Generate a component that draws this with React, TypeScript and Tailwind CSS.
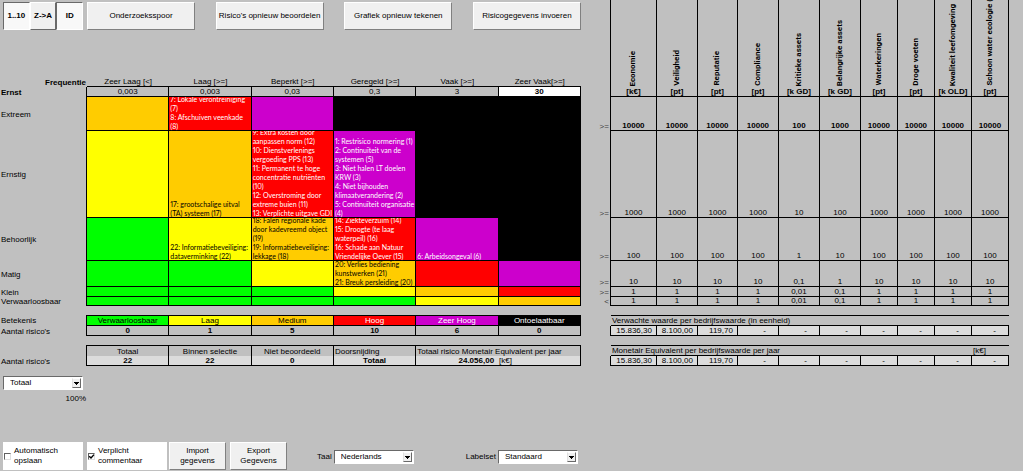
import { useState } from "react";
import type { ReactNode } from "react";

type Level = "none" | "low" | "medium" | "high" | "veryHigh" | "unacceptable";

interface MatrixCell {
  level: Level;
  lines?: string[];
}

interface MatrixRow {
  label: string;
  height: string;
  cells: MatrixCell[];
}

const LEVEL_CLASS: Record<Level, string> = {
  none: "bg-[#00ff00] text-black",
  low: "bg-[#ffff00] text-black",
  medium: "bg-[#ffcc00] text-black",
  high: "bg-[#ff0000] text-white",
  veryHigh: "bg-[#cc00cc] text-white",
  unacceptable: "bg-black text-white",
};

const FREQUENCIES = [
  { label: "Zeer Laag [<]", value: "0,003" },
  { label: "Laag [>=]", value: "0,003" },
  { label: "Beperkt [>=]", value: "0,03" },
  { label: "Geregeld [>=]", value: "0,3" },
  { label: "Vaak [>=]", value: "3" },
  { label: "Zeer Vaak[>=]", value: "30" },
];

const MATRIX: MatrixRow[] = [
  {
    label: "Extreem",
    height: "h-[34px]",
    cells: [
      { level: "medium" },
      { level: "high", lines: ["7: Lokale verontreiniging", "(7)", "8: Afschuiven veenkade", "(8)"] },
      { level: "veryHigh" },
      { level: "unacceptable" },
      { level: "unacceptable" },
      { level: "unacceptable" },
    ],
  },
  {
    label: "Ernstig",
    height: "h-[87px]",
    cells: [
      { level: "low" },
      { level: "medium", lines: ["17: grootschalige uitval", "(TA) systeem (17)"] },
      {
        level: "high",
        lines: [
          "9: Extra kosten door",
          "aanpassen norm (12)",
          "10: Dienstverlenings",
          "vergoeding PPS (13)",
          "11: Permanent te hoge",
          "concentratie nutriënten",
          "(10)",
          "12: Overstroming door",
          "extreme buien (11)",
          "13: Verplichte uitgave GDI",
        ],
      },
      {
        level: "veryHigh",
        lines: [
          "1: Restrisico normering (1)",
          "2: Continuïteit van de",
          "systemen (5)",
          "3: Niet halen LT doelen",
          "KRW (3)",
          "4: Niet bijhouden",
          "klimaatverandering (2)",
          "5: Continuïteit organisatie",
          "(4)",
        ],
      },
      { level: "unacceptable" },
      { level: "unacceptable" },
    ],
  },
  {
    label: "Behoorlijk",
    height: "h-[43px]",
    cells: [
      { level: "none" },
      { level: "low", lines: ["22: Informatiebeveiliging:", "dataverminking (22)"] },
      {
        level: "medium",
        lines: ["18: Falen regionale kade", "door kadevreemd object", "(19)", "19: Informatiebeveiliging:", "lekkage (18)"],
      },
      {
        level: "high",
        lines: ["14: Ziekteverzuim (14)", "15: Droogte (te laag", "waterpeil) (16)", "16: Schade aan Natuur", "Vriendelijke Oever (15)"],
      },
      { level: "veryHigh", lines: ["6: Arbeidsongeval (6)"] },
      { level: "unacceptable" },
    ],
  },
  {
    label: "Matig",
    height: "h-[26px]",
    cells: [
      { level: "none" },
      { level: "none" },
      { level: "low" },
      { level: "medium", lines: ["20: Verlies bediening", "kunstwerken (21)", "21: Breuk persleiding (20)"] },
      { level: "high" },
      { level: "veryHigh" },
    ],
  },
  {
    label: "Klein",
    height: "h-[10px]",
    cells: [
      { level: "none" },
      { level: "none" },
      { level: "none" },
      { level: "low" },
      { level: "medium" },
      { level: "high" },
    ],
  },
  {
    label: "Verwaarloosbaar",
    height: "h-[9px]",
    cells: [
      { level: "none" },
      { level: "none" },
      { level: "none" },
      { level: "none" },
      { level: "low" },
      { level: "medium" },
    ],
  },
];

const LEGEND: { level: Level; label: string; count: number }[] = [
  { level: "none", label: "Verwaarloosbaar", count: 0 },
  { level: "low", label: "Laag", count: 1 },
  { level: "medium", label: "Medium", count: 5 },
  { level: "high", label: "Hoog", count: 10 },
  { level: "veryHigh", label: "Zeer Hoog", count: 6 },
  { level: "unacceptable", label: "Ontoelaatbaar", count: 0 },
];

const VALUES = [
  { name: "Economie", unit: "[k€]" },
  { name: "Veiligheid", unit: "[pt]" },
  { name: "Reputatie", unit: "[pt]" },
  { name: "Compliance", unit: "[pt]" },
  { name: "Kritieke assets", unit: "[k GD]" },
  { name: "Belangrijke assets", unit: "[k GD]" },
  { name: "Waterkeringen", unit: "[pt]" },
  { name: "Droge voeten", unit: "[pt]" },
  { name: "Kwaliteit leefomgeving", unit: "[k OLD]" },
  { name: "Schoon water ecologie (", unit: "[pt]" },
];

const THRESHOLDS = [
  { sign: ">=", height: "h-[34px]", values: ["10000", "10000", "10000", "10000", "100", "1000", "10000", "10000", "10000", "10000"] },
  { sign: ">=", height: "h-[87px]", values: ["1000", "1000", "1000", "1000", "10", "100", "1000", "1000", "1000", "1000"] },
  { sign: ">=", height: "h-[43px]", values: ["100", "100", "100", "100", "1", "10", "100", "100", "100", "100"] },
  { sign: ">=", height: "h-[26px]", values: ["10", "10", "10", "10", "0,1", "1", "10", "10", "10", "10"] },
  { sign: ">=", height: "h-[10px]", values: ["1", "1", "1", "1", "0,01", "0,1", "1", "1", "1", "1"] },
  { sign: "<", height: "h-[9px]", values: ["1", "1", "1", "1", "0,01", "0,1", "1", "1", "1", "1"] },
];

const AMOUNTS = ["15.836,30", "8.100,00", "119,70", "-", "-", "-", "-", "-", "-", "-"];

const TABLE = "w-full table-fixed border-separate border-spacing-0";

function RaisedButton({ children, className = "" }: { children: ReactNode; className?: string }) {
  return (
    <button
      type="button"
      className={`h-7 border border-t-white border-l-white border-r-[#808080] border-b-[#808080] bg-[#f0f0f0] text-center ${className}`}
    >
      {children}
    </button>
  );
}

function ToggleButton({ label, pressed, onClick }: { label: string; pressed: boolean; onClick: () => void }) {
  return (
    <button
      type="button"
      aria-pressed={pressed}
      onClick={onClick}
      className={`h-7 flex-1 border text-center font-bold ${
        pressed
          ? "border-t-[#696969] border-l-[#696969] border-r-white border-b-white bg-[#f8f8f8]"
          : "border-t-white border-l-white border-r-[#696969] border-b-[#696969] bg-[#f0f0f0]"
      }`}
    >
      {label}
    </button>
  );
}

function Dropdown({ id, options, label }: { id: string; options: string[]; label?: string }) {
  return (
    <div className="relative w-20">
      <select
        id={id}
        aria-label={label}
        className="block h-[14px] w-full appearance-none border border-t-[#696969] border-l-[#696969] border-r-white border-b-white bg-white pl-[6px] text-black"
      >
        {options.map((option) => (
          <option key={option}>{option}</option>
        ))}
      </select>
      <span className="pointer-events-none absolute top-[2px] right-[2px] flex h-[10px] w-[9px] items-center justify-center border border-t-white border-l-[#e0e0e0] border-r-[#696969] border-b-[#696969] bg-[#f0f0f0]">
        <svg viewBox="0 0 5 3" className="h-[3px] w-[5px]" shapeRendering="crispEdges">
          <path d="M0 0h5L2.5 3z" fill="#000" />
        </svg>
      </span>
    </div>
  );
}

function CheckPanel({ id, lines, defaultChecked }: { id: string; lines: string[]; defaultChecked: boolean }) {
  const [checked, setChecked] = useState(defaultChecked);

  return (
    <label htmlFor={id} className="flex h-7 w-20 items-center gap-[3px] bg-white pl-px">
      <span className="relative h-[7px] w-[7px]">
        <input
          id={id}
          type="checkbox"
          checked={checked}
          onChange={(e) => setChecked(e.target.checked)}
          className="block h-[7px] w-[7px] appearance-none border border-t-[#606060] border-l-[#606060] border-r-[#e0e0e0] border-b-[#e0e0e0] bg-white"
        />
        {checked && (
          <svg viewBox="0 0 7 7" className="pointer-events-none absolute inset-0 h-[7px] w-[7px]">
            <path d="M1.2 3.2 3 5 6 1.6" fill="none" stroke="#000" strokeWidth="1.4" />
          </svg>
        )}
      </span>
      <span>
        {lines[0]}
        <br />
        {lines[1]}
      </span>
    </label>
  );
}

// keeps the text of a one-line cell inside its border
function Line({ children }: { children?: ReactNode }) {
  return <div className="h-[9px] leading-[9px] whitespace-nowrap">{children}</div>;
}

function RiskColumns() {
  return (
    <colgroup>
      <col className="w-[87px]" />
      {FREQUENCIES.map((f) => (
        <col key={f.label} />
      ))}
    </colgroup>
  );
}

function RiskMatrix() {
  return (
    <table className={TABLE}>
      <RiskColumns />
      <thead>
        <tr className="h-[10px]">
          <th className="p-0 pr-px text-right">
            <Line>Frequentie</Line>
          </th>
          {FREQUENCIES.map((f) => (
            <th key={f.label} className="border-b border-black p-0 font-normal">
              <Line>{f.label}</Line>
            </th>
          ))}
        </tr>
        <tr className="h-[10px]">
          <th className="border-r border-black p-0 pl-px text-left">
            <Line>Ernst</Line>
          </th>
          {FREQUENCIES.map((f, i) => (
            <td
              key={f.label}
              className={`border-r border-b border-black p-0 text-center ${i === 5 ? "bg-white font-bold" : ""}`}
            >
              <Line>{f.value}</Line>
            </td>
          ))}
        </tr>
      </thead>
      <tbody>
        {MATRIX.map((row) => (
          <tr key={row.label} className={row.height}>
            <th className="border-r border-black p-0 pl-px text-left align-middle font-normal">
              <Line>{row.label}</Line>
            </th>
            {row.cells.map((cell, i) => (
              <td key={i} className={`relative border-r border-b border-black p-0 ${LEVEL_CLASS[cell.level]}`}>
                {cell.lines && (
                  <div className="absolute inset-x-0 top-0 -bottom-px flex flex-col justify-end overflow-hidden pl-px font-[Lato,sans-serif] text-[7px] leading-[9px] whitespace-nowrap proportional-nums">
                    {cell.lines.map((line) => (
                      <div key={line} className="shrink-0">
                        {line}
                      </div>
                    ))}
                  </div>
                )}
              </td>
            ))}
          </tr>
        ))}
      </tbody>
    </table>
  );
}

function LegendTable() {
  return (
    <table className={TABLE}>
      <RiskColumns />
      <tbody>
        <tr className="h-[11px]">
          <th className="border-r border-black p-0 pl-px text-left font-normal">
            <Line>Betekenis</Line>
          </th>
          {LEGEND.map((item) => (
            <th key={item.label} className={`border-y border-r border-black p-0 font-normal ${LEVEL_CLASS[item.level]}`}>
              <Line>{item.label}</Line>
            </th>
          ))}
        </tr>
        <tr className="h-[10px]">
          <th className="border-r border-black p-0 pl-px text-left font-normal">
            <Line>Aantal risico's</Line>
          </th>
          {LEGEND.map((item) => (
            <td key={item.label} className="border-r border-b border-black p-0 text-center font-bold">
              <Line>{item.count}</Line>
            </td>
          ))}
        </tr>
      </tbody>
    </table>
  );
}

function TotalsTable() {
  const head = "border-t border-r border-black p-0 font-normal";
  const value = "border-r border-b border-black bg-[#dcdcdc] p-0 text-center font-bold";

  return (
    <table className={TABLE}>
      <RiskColumns />
      <tbody>
        <tr className="h-[11px]">
          <td className="border-r border-black p-0" />
          <th className={head}>
            <Line>Totaal</Line>
          </th>
          <th className={head}>
            <Line>Binnen selectie</Line>
          </th>
          <th className={head}>
            <Line>Niet beoordeeld</Line>
          </th>
          <th className={`${head} pl-px text-left`}>
            <Line>Doorsnijding</Line>
          </th>
          <th colSpan={2} className={`${head} pl-px text-left`}>
            <Line>Totaal risico Monetair Equivalent per jaar</Line>
          </th>
        </tr>
        <tr className="h-[10px]">
          <th className="border-r border-black p-0 pl-px text-left font-normal">
            <Line>Aantal risico's</Line>
          </th>
          {["22", "22", "0", "Totaal"].map((text, i) => (
            <td key={i} className={value}>
              <Line>{text}</Line>
            </td>
          ))}
          <td colSpan={2} className={value}>
            <div className="grid grid-cols-2">
              <div className="pr-1 text-right">
                <Line>24.056,00</Line>
              </div>
              <div className="pl-px text-left font-normal">
                <Line>[k€]</Line>
              </div>
            </div>
          </td>
        </tr>
      </tbody>
    </table>
  );
}

function ValueColumns() {
  return (
    <colgroup>
      <col className="w-[14px]" />
      <col className="w-[46px]" />
      <col className="w-[41px]" />
      <col className="w-[40px]" />
      <col className="w-[41px]" />
      <col className="w-[41px]" />
      <col className="w-[41px]" />
      <col className="w-[37px]" />
      <col className="w-[37px]" />
      <col className="w-[37px]" />
      <col className="w-[37px]" />
    </colgroup>
  );
}

function ThresholdTable() {
  return (
    <table className={TABLE}>
      <ValueColumns />
      <thead>
        <tr className="h-[97px]">
          <td className="border-r border-black p-0" />
          {VALUES.map((v) => (
            <th key={v.name} className="border-r border-b border-black p-0">
              <div className="flex h-24 flex-col items-center justify-end overflow-hidden">
                <span className="mb-px shrink-0 rotate-180 font-[Roboto,sans-serif] whitespace-nowrap [writing-mode:vertical-rl]">
                  {v.name}
                </span>
                <Line>{v.unit}</Line>
              </div>
            </th>
          ))}
        </tr>
      </thead>
      <tbody>
        {THRESHOLDS.map((row, r) => (
          <tr key={r} className={row.height}>
            <th className="border-r border-black p-0 pr-px text-right align-bottom font-normal text-[#404040]">
              <Line>{row.sign}</Line>
            </th>
            {row.values.map((value, i) => (
              <td
                key={i}
                className={`border-r border-b border-black p-0 text-center align-bottom ${r === 0 ? "font-bold" : ""}`}
              >
                <div className="h-[8px] leading-[8px]">{value}</div>
              </td>
            ))}
          </tr>
        ))}
      </tbody>
    </table>
  );
}

function AmountTable({ title, unit }: { title: string; unit?: string }) {
  return (
    <table className={TABLE}>
      <ValueColumns />
      <tbody>
        <tr className="h-[11px]">
          <td className="p-0" />
          <th colSpan={9} className="border-y border-black p-0 pl-px text-left font-normal">
            <Line>{title}</Line>
          </th>
          <td className="border-y border-black p-0 pl-px">
            <Line>{unit}</Line>
          </td>
        </tr>
        <tr className="h-[10px]">
          <td className="border-r border-black p-0" />
          {AMOUNTS.map((amount, i) => (
            <td
              key={i}
              className={`border-r border-b border-black bg-[#dcdcdc] p-0 text-right ${amount === "-" ? "pr-3" : "pr-1"}`}
            >
              <Line>{amount}</Line>
            </td>
          ))}
        </tr>
      </tbody>
    </table>
  );
}

export default function App() {
  const [sort, setSort] = useState({ number: true, reverse: false, id: true });

  return (
    <div className="flex min-h-screen flex-col bg-[#c0c0c0] font-['Liberation_Sans',Arial,sans-serif] text-[8px] leading-[10px] text-black">
      <div className="flex gap-4 pr-[14px]">
        <div className="flex flex-[581] flex-col gap-[9px]">
          <div>
            <div className="flex h-[77px] items-start pt-[2px]">
              <div className="flex w-[87px] pr-1 pl-[3px]">
                <ToggleButton label="1..10" pressed={sort.number} onClick={() => setSort({ ...sort, number: !sort.number })} />
                <ToggleButton label="Z->A" pressed={sort.reverse} onClick={() => setSort({ ...sort, reverse: !sort.reverse })} />
                <ToggleButton label="ID" pressed={sort.id} onClick={() => setSort({ ...sort, id: !sort.id })} />
              </div>
              <div className="flex flex-1 justify-between">
                <RaisedButton className="w-[108px]">Onderzoeksspoor</RaisedButton>
                <RaisedButton className="w-[108px]">Risico's opnieuw beoordelen</RaisedButton>
                <RaisedButton className="w-[108px]">Grafiek opnieuw tekenen</RaisedButton>
                <RaisedButton className="w-[108px]">Risicogegevens invoeren</RaisedButton>
              </div>
            </div>
            <RiskMatrix />
          </div>
          <LegendTable />
          <TotalsTable />
        </div>
        <div className="flex flex-[412] flex-col gap-[9px]">
          <ThresholdTable />
          <AmountTable title="Verwachte waarde per bedrijfswaarde (in eenheid)" />
          <AmountTable title="Monetair Equivalent per bedrijfswaarde per jaar" unit="[k€]" />
        </div>
      </div>

      <div className="w-[87px] pt-[10px] pl-[3px]">
        <Dropdown id="doorsnijding" label="Doorsnijding" options={["Totaal"]} />
        <div className="pt-1 pr-px text-right">100%</div>
      </div>

      <div className="mt-auto flex items-end pb-px pl-[3px]">
        <div className="flex gap-1">
          <CheckPanel id="auto-save" lines={["Automatisch", "opslaan"]} defaultChecked={false} />
          <CheckPanel id="comment" lines={["Verplicht", "commentaar"]} defaultChecked />
        </div>
        <div className="ml-[2px] flex gap-1">
          <RaisedButton className="w-[57px]">
            Import
            <br />
            gegevens
          </RaisedButton>
          <RaisedButton className="w-[57px]">
            Export
            <br />
            Gegevens
          </RaisedButton>
        </div>
        <div className="ml-[30px] flex items-center gap-[2px] pb-[6px]">
          <label htmlFor="language">Taal</label>
          <Dropdown id="language" options={["Nederlands"]} />
        </div>
        <div className="ml-[52px] flex items-center gap-[2px] pb-[6px]">
          <label htmlFor="labelset">Labelset</label>
          <Dropdown id="labelset" options={["Standaard"]} />
        </div>
      </div>
    </div>
  );
}
